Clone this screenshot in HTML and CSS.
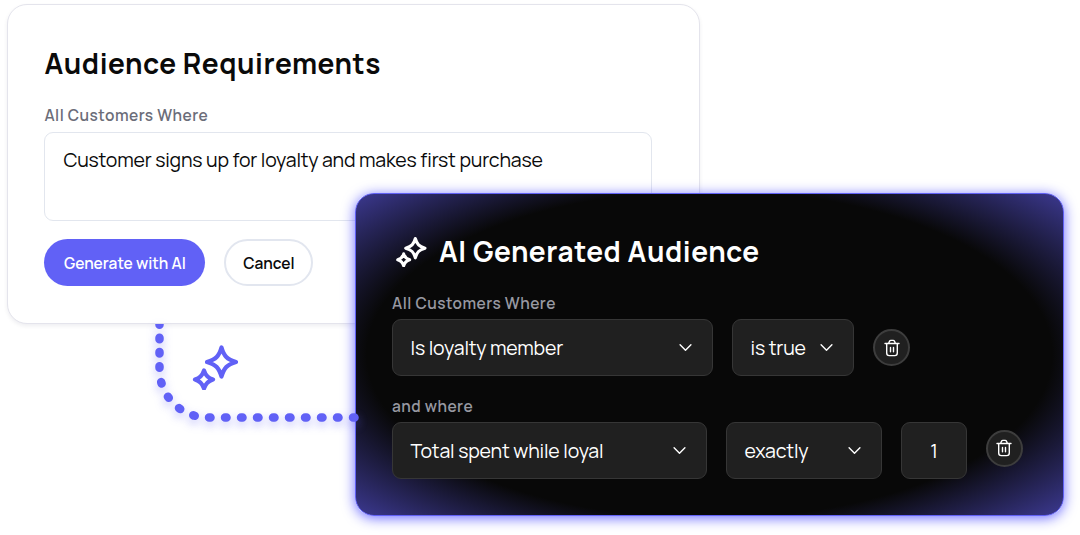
FILE: index.html
```html
<!DOCTYPE html>
<html lang="en">
<head>
  <meta charset="UTF-8"/>
  <meta name="viewport" content="width=device-width, initial-scale=1.0"/>
  <title>Audience Requirements</title>
  <link rel="stylesheet" href="styles.css">
</head>
<body>

  <!-- shared icons -->
  <svg class="icon-defs" width="0" height="0" aria-hidden="true">
    <symbol id="icon-sparkles" viewBox="0 0 48 46">
      <path d="M30.500 3.500 C33 12.200 36 15.400 45 18 C36 20.600 33 23.800 30.500 32.500 C28 23.800 25 20.600 16 18 C25 15.400 28 12.200 30.500 3.500 Z"/>
      <path d="M13 26.500 C14.500 31.500 17 34 22 35.500 C17 37 14.500 39.500 13 44.500 C11.500 39.500 9 37 4 35.500 C9 34 11.500 31.500 13 26.500 Z"/>
    </symbol>
    <symbol id="icon-chevron" viewBox="0 0 12 8">
      <path d="M1 1.500 L6 6.500 L11 1.500"/>
    </symbol>
    <symbol id="icon-trash" viewBox="0 0 16 18">
      <path d="M1 4.500 H15 M4.500 4.500 L5.500 2.300 Q5.900 1.400 6.900 1.400 H9.100 Q10.100 1.400 10.500 2.300 L11.500 4.500 M2.700 4.500 V14 Q2.700 16.600 5.300 16.600 H10.700 Q13.300 16.600 13.300 14 V4.500 M6.500 8.500 V12.700 M9.500 8.500 V12.700"/>
    </symbol>
  </svg>

  <div class="stage">
    <div class="card">
      <h1 class="card-title">Audience Requirements</h1>
      <div class="label">All Customers Where</div>
      <div class="prompt-box">Customer signs up for loyalty and makes first purchase</div>
      <div class="actions">
        <button class="btn btn-primary">Generate with AI</button>
        <button class="btn btn-outline">Cancel</button>
      </div>
    </div>

    <div class="panel">
      <div class="panel-header">
        <svg class="panel-sparkles"><use href="#icon-sparkles"/></svg>
        <h2 class="panel-title">AI Generated Audience</h2>
      </div>

      <div class="label">All Customers Where</div>
      <div class="rule">
        <div class="select select-member"><span>Is loyalty member</span><svg class="chevron"><use href="#icon-chevron"/></svg></div>
        <div class="select select-true"><span>is true</span><svg class="chevron"><use href="#icon-chevron"/></svg></div>
        <button class="delete-btn" aria-label="Delete"><svg><use href="#icon-trash"/></svg></button>
      </div>

      <div class="label label-and">and where</div>
      <div class="rule rule-spent">
        <div class="select select-spent"><span>Total spent while loyal</span><svg class="chevron"><use href="#icon-chevron"/></svg></div>
        <div class="select select-exactly"><span>exactly</span><svg class="chevron"><use href="#icon-chevron"/></svg></div>
        <div class="select select-count"><span>1</span></div>
        <button class="delete-btn" aria-label="Delete"><svg><use href="#icon-trash"/></svg></button>
      </div>
    </div>

    <!-- dotted connector from the card to the panel -->
    <svg class="connector" viewBox="140 324 240 116">
      <path class="dots-down" d="M159.500 324 V354"/>
      <path class="dots-turn" d="M159.500 366.300 V369.500 A48 48 0 0 0 207.500 417.500 H356"/>
    </svg>
    <svg class="float-sparkles"><use href="#icon-sparkles"/></svg>
  </div>

</body>
</html>
```

FILE: styles.css
```css
* {
  box-sizing: border-box;
  margin: 0;
  padding: 0;
}

body {
  font-family: Manrope, Inter, sans-serif;
  background: #fff;
  color: #0a0a0a;
  overflow: hidden;
}

.icon-defs {
  position: absolute;
}

.stage {
  position: relative;
  height: 535px;
  padding: 4px 0 0 7px;
}

.card {
  width: 693px;
  height: 320px;
  padding: 40px 47px 0 36.4px;
  background: #fff;
  border: 1px solid #e4e4ec;
  border-radius: 20px;
  box-shadow: 0 2px 4px rgba(20, 20, 50, 0.07);
}

.card-title,
.panel-title {
  font-size: 28px;
  font-weight: 700;
  line-height: 36px;
  letter-spacing: 0.56px;
  white-space: nowrap;
}

.label {
  font-size: 15.5px;
  font-weight: 600;
  line-height: 20px;
  letter-spacing: 0.47px;
  color: #6b6d79;
}

.card .label {
  margin-top: 24px;
}

.prompt-box {
  height: 89px;
  margin-top: 7px;
  padding: 13px 18px;
  border: 1px solid #e2e6ee;
  border-radius: 9px;
  font-size: 19.5px;
  line-height: 28px;
  letter-spacing: -0.19px;
  white-space: nowrap;
}

.actions {
  display: flex;
  gap: 19px;
  margin-top: 18px;
}

.btn {
  height: 47px;
  border-radius: 24px;
  font-family: inherit;
  font-size: 15.5px;
  font-weight: 600;
  white-space: nowrap;
}

.btn-primary {
  width: 161px;
  background: #6161f6;
  color: #fff;
  border: none;
}

.btn-outline {
  width: 89px;
  background: #fff;
  color: #0a0a0a;
  border: 2px solid #e2e6ef;
}

.panel {
  position: absolute;
  left: 355px;
  top: 193px;
  width: 709px;
  height: 323px;
  padding: 39px 36px 0;
  border: 1px solid #6161f6;
  border-radius: 19px;
  background: radial-gradient(ellipse 57% 60% at 50% 50%, #080808 85%, #3d3a94 122%);
  box-shadow: 0 2px 13px rgba(97, 97, 255, 0.95);
  color: #fff;
}

.panel-header {
  display: flex;
  align-items: center;
}

.panel-sparkles {
  width: 32px;
  height: 31px;
  margin: 0 12.5px 0 2.5px;
  fill: none;
  stroke: #fff;
  stroke-width: 4.6;
  stroke-linejoin: round;
}

.panel .label {
  margin-top: 24px;
  color: #9798a1;
}

.panel .label-and {
  margin-top: 20px;
}

.rule {
  display: flex;
  align-items: center;
  gap: 19px;
  margin-top: 6px;
}

.select {
  display: flex;
  align-items: center;
  justify-content: space-between;
  height: 57px;
  padding: 0 20.5px 0 17.5px;
  background: #202020;
  border: 1px solid #363636;
  border-radius: 9px;
  font-size: 19.5px;
  letter-spacing: -0.17px;
  white-space: nowrap;
}

.select-member {
  width: 321px;
}

.select-true {
  width: 122px;
}

.select-spent {
  width: 315px;
}

.select-exactly {
  width: 156px;
}

.select-count {
  width: 66px;
  padding: 0;
  justify-content: center;
}

.chevron {
  width: 13px;
  height: 9px;
  fill: none;
  stroke: #fff;
  stroke-width: 1.3;
  stroke-linecap: round;
  stroke-linejoin: round;
}

.delete-btn {
  display: flex;
  align-items: center;
  justify-content: center;
  width: 37px;
  height: 37px;
  background: #202020;
  border: 2px solid #3d3d3d;
  border-radius: 50%;
}

.delete-btn svg {
  width: 16px;
  height: 18px;
  fill: none;
  stroke: #fff;
  stroke-width: 1.4;
  stroke-linecap: round;
}

.rule-spent .delete-btn {
  margin: 0 0 5px -0.5px;
}

.connector {
  position: absolute;
  left: 140px;
  top: 324px;
  width: 240px;
  height: 116px;
  fill: none;
  stroke: #6161f6;
  stroke-width: 8.5;
  stroke-linecap: round;
  filter: drop-shadow(0 4px 5px rgba(97, 97, 246, 0.4));
}

.dots-down {
  stroke-dasharray: 1.5 12.9;
  stroke-dashoffset: 0.7;
}

.dots-turn {
  stroke-dasharray: 1.5 14.5;
}

.float-sparkles {
  position: absolute;
  left: 191px;
  top: 344px;
  width: 48px;
  height: 46px;
  fill: none;
  stroke: #6161f6;
  stroke-width: 4.3;
  stroke-linejoin: round;
}
```
